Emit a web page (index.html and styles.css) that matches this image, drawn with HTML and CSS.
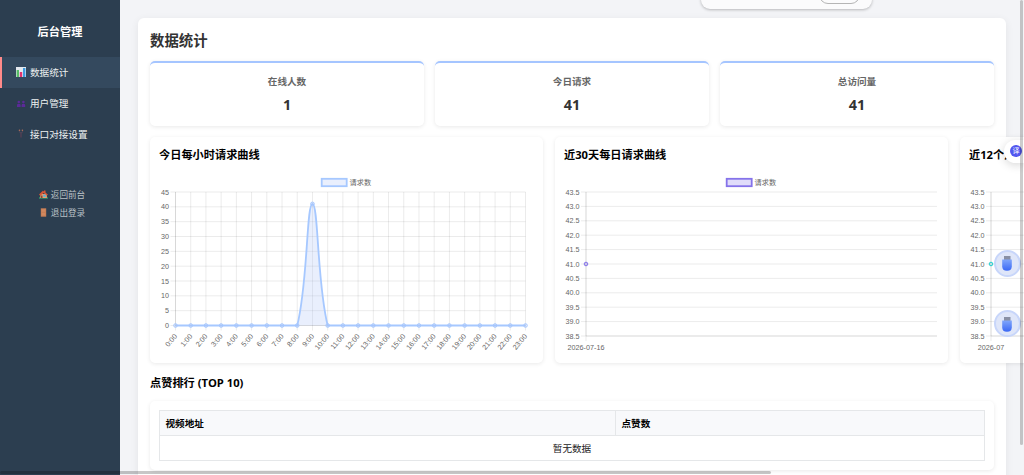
FILE: index.html
```html
<!DOCTYPE html>
<html lang="zh-CN">
<head>
<meta charset="UTF-8" />
<meta name="viewport" content="width=device-width, initial-scale=1" />
<title>后台管理</title>
<link rel="stylesheet" href="styles.css">
</head>
<body>

<aside class="sidebar">
  <h2>后台管理</h2>
  <nav>
    <a class="nav-item active">
      <svg class="nav-icon" viewBox="0 0 10 10"><rect width="10" height="10" fill="#e4e9ef"/><rect x=".6" y="3" width="2.4" height="7" fill="#56bd68"/><rect x="3.8" y="5" width="2.4" height="5" fill="#e0336f"/><rect x="7" y="1" width="2.4" height="9" fill="#3c9be0"/></svg>
      数据统计
    </a>
    <a class="nav-item">
      <svg class="nav-icon" viewBox="0 0 10 10" fill="#5b2a98"><circle cx="2.8" cy="4" r="1.3"/><circle cx="7.4" cy="4" r="1.3"/><path d="M1 9V7.2q0-1.4 1.8-1.4t1.8 1.4V9zM5.6 9V7.2q0-1.4 1.8-1.4t1.8 1.4V9z"/></svg>
      用户管理
    </a>
    <a class="nav-item">
      <svg class="nav-icon" viewBox="0 0 10 10"><path d="M3.4 1.2v1.6q0 1 1.6 1t1.5-1V1.2" fill="none" stroke="#53465a"/><circle cx="3.5" cy="1.2" r=".8" fill="#b0705a"/><circle cx="6.4" cy="1.2" r=".8" fill="#b0705a"/><path d="M5 4v4.5" stroke="#633e55"/></svg>
      接口对接设置
    </a>
  </nav>
  <div class="sidebar-links">
    <a><svg viewBox="0 0 9 9"><path d="M0 8.7V7.2h9v1.5z" fill="#35966a"/><path d="M1.3 4h6.6v4H1.3z" fill="#e7a071"/><path d="M0 4.6 3.8.8 5 1.5V.4h1.5v2L9 4.8 7.6 5.6 4.7 3 1.2 5.8z" fill="#d95636"/><path d="M4.3 4.6h2.4v2.2H4.3z" fill="#4fb4df"/><path d="M2 5.5h1.5V8H2z" fill="#8d4a35"/></svg>返回前台</a>
    <a><svg viewBox="0 0 9 9"><path d="M1.8.3h5.4v8.4H1.8z" fill="#c97f55"/><path d="M2.8 1.3h3.4v2.5H2.8zM2.8 5h3.4v2.5H2.8z" fill="#d08860"/></svg>退出登录</a>
  </div>
</aside>

<main class="main">
  <section class="panel">
    <h1>数据统计</h1>

    <div class="stats">
      <div class="stat-card"><h4>在线人数</h4><p>1</p></div>
      <div class="stat-card"><h4>今日请求</h4><p>41</p></div>
      <div class="stat-card"><h4>总访问量</h4><p>41</p></div>
    </div>

    <div class="charts">
      <div class="chart-card">
        <h3>今日每小时请求曲线</h3>
        <svg class="chart" id="hourChart"></svg>
      </div>
      <div class="chart-card">
        <h3>近30天每日请求曲线</h3>
        <svg class="chart" id="dayChart"></svg>
      </div>
      <div class="chart-card">
        <h3>近12个月请求曲线</h3>
        <svg class="chart" id="monthChart"></svg>
      </div>
    </div>

    <h3 class="rank-title">点赞排行 (TOP 10)</h3>
    <div class="table-card">
      <table>
        <thead><tr><th class="col-url">视频地址</th><th>点赞数</th></tr></thead>
        <tbody><tr><td colspan="2">暂无数据</td></tr></tbody>
      </table>
    </div>
  </section>
</main>

<div class="top-pill"><div class="pill-btn"></div></div>

<div class="translate-btn">
  <span>译</span>
</div>

<div class="float-btn float-first">
  <svg viewBox="0 0 12 18">
    <defs><linearGradient id="usb" x1="0" y1="0" x2="0" y2="1"><stop offset="0" stop-color="#80a6fb"/><stop offset="1" stop-color="#3b68f5"/></linearGradient></defs>
    <rect x="3" y="2" width="6.5" height="4.5" fill="#8990a5"/>
    <path d="M1.2 5.5h9.6v7q0 4.2-4.8 4.2t-4.8-4.2z" fill="url(#usb)"/>
  </svg>
</div>
<div class="float-btn float-second">
  <svg viewBox="0 0 12 18">
    <rect x="3" y="2" width="6.5" height="4.5" fill="#8990a5"/>
    <path d="M1.2 5.5h9.6v7q0 4.2-4.8 4.2t-4.8-4.2z" fill="url(#usb)"/>
  </svg>
</div>

<div class="scroll-y"></div>
<div class="scroll-x"></div>

<script src="charts.js"></script>
</body>
</html>
```
FILE: styles.css
```css
* {
  box-sizing: border-box;
}
body {
  margin: 0;
  height: 475px;
  display: flex;
  overflow: hidden;
  position: relative;
  font-family: "Open Sans", "Noto Sans CJK SC", sans-serif;
  font-size: 9.6px;
  background: #f3f4f7;
  color: #000;
}
h1, h2, h3, h4, p {
  margin: 0;
}
.sidebar {
  width: 120px;
  flex-shrink: 0;
  height: 475px;
  background: #2c3e50;
  color: #fff;
}
.sidebar h2 {
  padding-top: 24px;
  height: 56.5px;
  font-size: 11.2px;
  line-height: 16px;
  text-align: center;
}
.nav-item {
  display: flex;
  align-items: center;
  gap: 4px;
  height: 31px;
  padding: 0 0 1px 14px;
  border-left: 2px solid transparent;
  color: #ecf0f1;
}
.nav-item.active {
  background: #34495e;
  border-left-color: #ff8a8a;
}
.nav-icon {
  width: 10px;
  height: 10px;
  margin-top: 1px;
}
.sidebar-links {
  display: flex;
  flex-direction: column;
  align-items: center;
  margin-top: 35.5px;
  padding-left: 4px;
}
.sidebar-links a {
  display: flex;
  align-items: center;
  gap: 3px;
  height: 18px;
  font-size: 8.6px;
  color: #b9c0c6;
}
.sidebar-links svg {
  width: 9px;
  height: 9px;
}
.main {
  flex: 1;
  min-width: 0;
  padding: 18px;
}
.panel {
  height: 480px;
  padding: 12px;
  background: #fff;
  border-radius: 6px;
  box-shadow: 0 2px 9px rgba(0,0,0,0.07);
}
.panel h1 {
  height: 31px;
  font-size: 14.4px;
  line-height: 21px;
  color: #333;
}
.stats {
  display: grid;
  grid-template-columns: repeat(3, 1fr);
  gap: 11px;
}
.stat-card {
  height: 65px;
  padding-top: 11px;
  text-align: center;
  background: #fff;
  border-top: 2px solid #a5c5ff;
  border-radius: 5px;
  box-shadow: 0 1px 4px rgba(0,0,0,0.09);
}
.stat-card h4 {
  font-size: 9.6px;
  line-height: 16px;
  color: #666;
}
.stat-card p {
  margin-top: 5px;
  font-size: 14.4px;
  line-height: 20px;
  font-weight: bold;
  color: #333;
}
.charts {
  display: flex;
  gap: 12px;
  margin-top: 11px;
}
.chart-card {
  width: 393px;
  height: 226px;
  flex-shrink: 0;
  padding: 9px;
  background: #fff;
  border-radius: 5px;
  box-shadow: 0 1px 4px rgba(0,0,0,0.09);
}
.chart-card h3 {
  height: 26px;
  font-size: 11.2px;
  line-height: 17px;
}
.chart {
  display: block;
  width: 375px;
  height: 182px;
  overflow: visible;
}
.chart text {
  font-family: "Liberation Sans", "Noto Sans CJK SC", sans-serif;
  font-size: 7.2px;
  fill: #666;
}
.grid {
  stroke: rgba(0,0,0,0.1);
  stroke-width: 0.8;
}
.rank-title {
  margin-top: 11px;
  font-size: 11.2px;
  line-height: 17px;
}
.table-card {
  height: 69px;
  margin-top: 10px;
  padding: 9px;
  border-radius: 5px;
  box-shadow: 0 1px 4px rgba(0,0,0,0.09);
}
table {
  width: 100%;
  border-collapse: collapse;
}
th, td {
  height: 25px;
  padding: 1px 5.5px 0;
  border: 1px solid #e5e7e9;
  line-height: 14px;
}
th {
  text-align: left;
  background: #f8f9fb;
}
td {
  text-align: center;
  color: #222;
}
.col-url {
  width: 456px;
}

/* floating widgets */
.top-pill {
  position: absolute;
  left: 701px;
  top: -20px;
  width: 171px;
  height: 29px;
  border-radius: 9px;
  background: #fbfbfc;
  box-shadow: 0 1px 3px rgba(0,0,0,0.25);
}
.pill-btn {
  width: 41px;
  height: 18px;
  margin: 6px 0 0 118px;
  border: 1px solid #b5b5b5;
  border-radius: 9px;
}
.translate-btn {
  position: absolute;
  left: 1004px;
  top: 140px;
  width: 20px;
  height: 23px;
  padding: 5px 0 0 6px;
  border-radius: 12px 0 0 12px;
  background: #fff;
  box-shadow: 0 2px 10px rgba(0,0,0,0.16);
}
.translate-btn span {
  display: block;
  width: 12px;
  height: 12px;
  border-radius: 50%;
  background: #5257ef;
  color: #fff;
  font-size: 7px;
  line-height: 12px;
  text-align: center;
}
.float-btn {
  position: absolute;
  left: 993.5px;
  display: flex;
  align-items: center;
  justify-content: center;
  width: 27px;
  height: 27px;
  border: 2px solid #c8d6fa;
  border-radius: 50%;
  background: #dfe6f9;
}
.float-btn svg {
  width: 12px;
  height: 18px;
}
.float-first {
  top: 249.5px;
}
.float-second {
  top: 310px;
}
.scroll-y {
  position: absolute;
  left: 1020px;
  top: 0;
  width: 3px;
  height: 445px;
  border-radius: 2px;
  background: rgba(0,0,0,0.2);
}
.scroll-x {
  position: absolute;
  left: 0;
  top: 471px;
  width: 771px;
  height: 3px;
  border-radius: 2px;
  background: rgba(0,0,0,0.22);
}
```
FILE: charts.js
```javascript
const TOP = 20;

function line(x1, y1, x2, y2) {
  return `<line class="grid" x1="${x1}" y1="${y1}" x2="${x2}" y2="${y2}" />`;
}

// cubic spline through the points, kept inside the plot area
function splinePath(pts, tension, top, bottom) {
  const clamp = y => Math.max(top, Math.min(bottom, y));
  const cps = pts.map((p, i) => {
    const prev = pts[i - 1] || p;
    const next = pts[i + 1] || p;
    const d1 = Math.hypot(p.x - prev.x, p.y - prev.y);
    const d2 = Math.hypot(next.x - p.x, next.y - p.y);
    const a = tension * d1 / (d1 + d2);
    const b = tension * d2 / (d1 + d2);
    return {
      inX: p.x - a * (next.x - prev.x), inY: clamp(p.y - a * (next.y - prev.y)),
      outX: p.x + b * (next.x - prev.x), outY: clamp(p.y + b * (next.y - prev.y))
    };
  });
  let d = `M${pts[0].x} ${pts[0].y}`;
  for (let i = 1; i < pts.length; i++) {
    d += `C${cps[i - 1].outX} ${cps[i - 1].outY} ${cps[i].inX} ${cps[i].inY} ${pts[i].x} ${pts[i].y}`;
  }
  return d;
}

function drawChart(id, o) {
  let html = `<rect x="162.7" y="6.8" width="25" height="7.4" fill="${o.fill}" stroke="${o.color}" stroke-width="1.8" />`;
  html += `<text x="190.5" y="12.8">请求数</text>`;

  const rows = (o.max - o.min) / o.step;
  for (let i = 0; i <= rows; i++) {
    const y = TOP + (o.bottom - TOP) * i / rows;
    html += line(o.left - 5, y, o.right, y);
    html += `<text x="${o.left - 6.5}" y="${y + 2.5}" text-anchor="end">${(o.max - i * o.step).toFixed(o.digits)}</text>`;
  }
  html += line(o.left, TOP, o.left, o.bottom + 5);
  html += line(o.left, TOP, o.left, o.bottom);
  html += line(o.left, o.bottom, o.right, o.bottom);

  const gap = o.labels.length > 1 ? (o.right - o.left) / (o.labels.length - 1) : 0;
  const pts = o.data.map((v, i) => ({
    x: o.left + gap * i,
    y: o.bottom - (v - o.min) / (o.max - o.min) * (o.bottom - TOP)
  }));

  o.labels.forEach((label, i) => {
    const x = pts[i].x;
    if (gap) {
      if (i) html += line(x, TOP, x, o.bottom + 5);
      html += `<text transform="translate(${x + 2} ${o.bottom + 11}) rotate(-50)" text-anchor="end">${label}</text>`;
    } else {
      html += `<text x="${x}" y="${o.bottom + 13.5}" text-anchor="middle">${label}</text>`;
    }
  });

  if (gap) {
    const d = splinePath(pts, 0.4, TOP, o.bottom);
    html += `<path d="${d}V${o.bottom}H${o.left}Z" fill="${o.fill}" />`;
    html += `<path d="${d}" fill="none" stroke="${o.color}" stroke-width="1.8" />`;
  }
  pts.forEach(p => {
    html += `<circle cx="${p.x}" cy="${p.y}" r="1.8" fill="${o.fill}" stroke="${o.color}" stroke-width="1" />`;
  });
  document.getElementById(id).innerHTML = html;
}

const hours = Array.from({ length: 24 }, (_, i) => i + ':00');

drawChart('hourChart', {
  left: 16.5, right: 366.5, bottom: 153.5, min: 0, max: 45, step: 5, digits: 0,
  labels: hours, data: hours.map((_, i) => i === 9 ? 41 : 0),
  color: '#a6c8ff', fill: 'rgba(166,193,246,0.25)'
});
drawChart('dayChart', {
  left: 22, right: 373, bottom: 164, min: 38.5, max: 43.5, step: 0.5, digits: 1,
  labels: ['2026-07-16'], data: [41],
  color: '#8573ea', fill: 'rgba(133,115,234,0.25)'
});
drawChart('monthChart', {
  left: 22, right: 373, bottom: 164, min: 38.5, max: 43.5, step: 0.5, digits: 1,
  labels: ['2026-07'], data: [41],
  color: '#22cfd0', fill: 'rgba(34,207,208,0.2)'
});
```
